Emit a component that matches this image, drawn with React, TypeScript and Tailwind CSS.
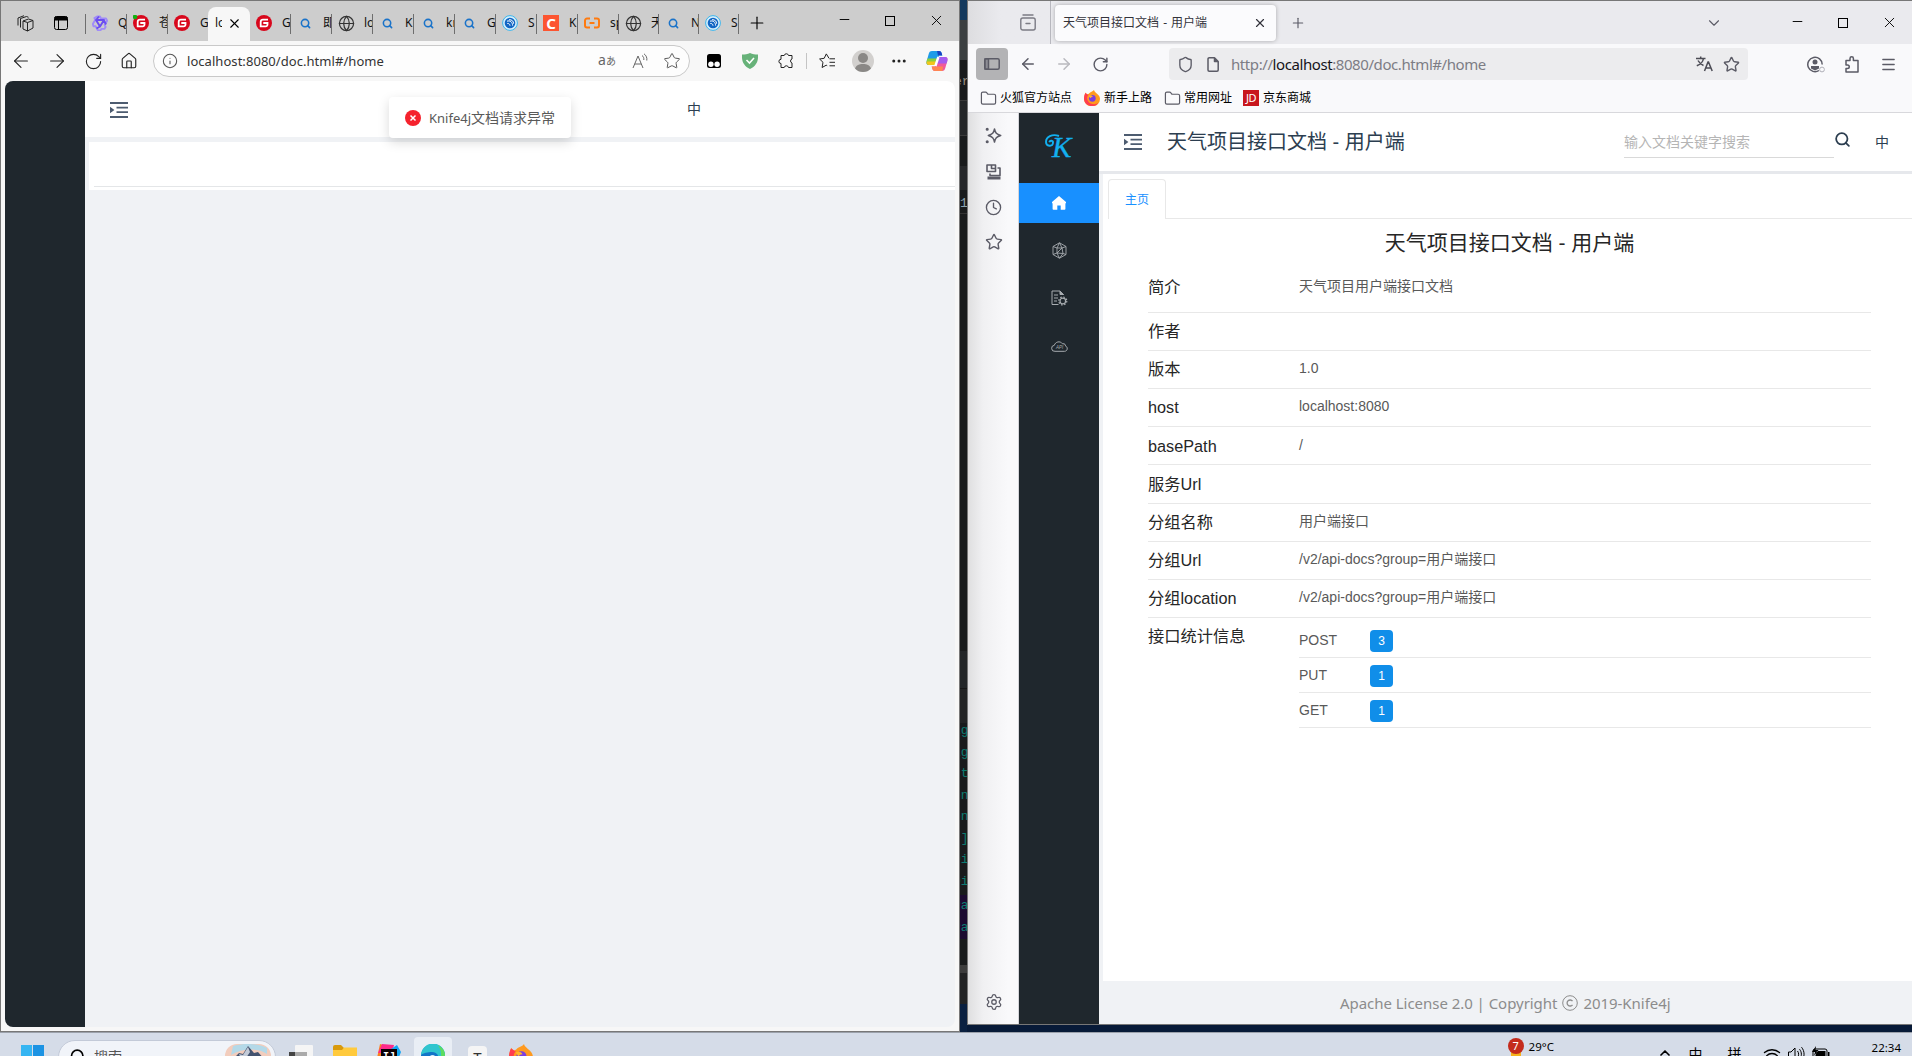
import React from 'react';
import {
  ArrowLeft,
  ArrowRight,
  ChevronDown,
  ChevronUp,
  Clock,
  Ellipsis,
  Folder,
  Globe,
  House,
  Info,
  Menu,
  Minus,
  Plus,
  RotateCw,
  Search,
  Settings,
  Shield,
  Star,
  Wifi,
  X
} from 'lucide-react';

type Favicon = 'qwen' | 'gitee' | 'giteeDot' | 'search' | 'globe' | 'spring' | 'csdn' | 'aliyun' | 'none';

interface EdgeTab {
  icon: Favicon;
  title: string;
  active?: boolean;
  width?: string;
}

const edgeTabs: EdgeTab[] = [
  { icon: 'qwen', title: 'Q' },
  { icon: 'giteeDot', title: '苍' },
  { icon: 'gitee', title: 'G' },
  { icon: 'none', title: 'lo', active: true },
  { icon: 'gitee', title: 'G' },
  { icon: 'search', title: '即' },
  { icon: 'globe', title: 'lo' },
  { icon: 'search', title: 'K' },
  { icon: 'search', title: 'kn' },
  { icon: 'search', title: 'G' },
  { icon: 'spring', title: 'S' },
  { icon: 'csdn', title: 'K' },
  { icon: 'aliyun', title: 'sp' },
  { icon: 'globe', title: '天', width: 'w-10' },
  { icon: 'search', title: 'N', width: 'w-10' },
  { icon: 'spring', title: 'S', width: 'w-10' }
];

const infoRows = [
  { label: '简介', value: '天气项目用户端接口文档', height: 'h-[54px]', pad: 'pt-[15px]' },
  { label: '作者', value: '', height: 'h-[38px]', pad: 'pt-[5px]' },
  { label: '版本', value: '1.0', height: 'h-[38px]', pad: 'pt-[5px]' },
  { label: 'host', value: 'localhost:8080', height: 'h-[38px]', pad: 'pt-[5px]' },
  { label: 'basePath', value: '/', height: 'h-[38px]', pad: 'pt-[6px]' },
  { label: '服务Url', value: '', height: 'h-[39px]', pad: 'pt-[6px]' },
  { label: '分组名称', value: '用户端接口', height: 'h-[38px]', pad: 'pt-[5px]' },
  { label: '分组Url', value: '/v2/api-docs?group=用户端接口', height: 'h-[38px]', pad: 'pt-[5px]' },
  { label: '分组location', value: '/v2/api-docs?group=用户端接口', height: 'h-[38px]', pad: 'pt-[5px]' }
];

const methodStats = [
  { method: 'POST', count: 3 },
  { method: 'PUT', count: 1 },
  { method: 'GET', count: 1 }
];

const codeLines = ['ig', 'ig', ' t', 'on', 'on', 't]', 'Di', 'Di'];

const GiteeIcon: React.FC<{ dot?: boolean }> = ({ dot }) => (
  <svg width="16" height="16" viewBox="0 0 16 16" fill="none">
    <circle cx="8" cy="8" r="8" fill="#d8071c" />
    <path d="M12 4.700H7A2.300 2.300 0 0 0 4.700 7v4.300h5A1.800 1.800 0 0 0 11.500 9.500V8H7.300" stroke="#fff" strokeWidth="1.800" />
    {dot && <circle cx="2" cy="2" r="2.300" fill="#12b212" />}
  </svg>
);

const SpringFavicon = () => (
  <svg width="16" height="16" viewBox="0 0 16 16" fill="none">
    <circle cx="8" cy="8" r="7.400" fill="#d5eefa" stroke="#3db5ec" />
    <circle cx="8" cy="8" r="5.300" fill="#1166c4" />
    <path d="M5 6.200c3-1 5.500.8 5.600 4.400M5.300 8.500c1.500-.2 2.600.6 2.700 2.200M7 4.700c3-.2 4.800 1.800 4.600 4" stroke="#fff" strokeWidth="1" />
  </svg>
);

const QwenIcon = () => (
  <svg width="16" height="16" viewBox="0 0 16 16" fill="none" stroke="#6b4df0" strokeWidth="1.900" strokeLinejoin="round">
    <path d="M5 1.500h3l1 2h5l1.200 2.200-2.600 4.200 1 2-1.200 2H9.500l-1.200 1.600H6l-2.400-4.200H1.500L.8 9l2.500-4.200-.9-1.700z" stroke="#a08bf8" />
    <path d="M4 5h8l-4 6.500zM7 1.500 4 5M14 9.500l-2-4M4.500 13.500l3.500-2" />
  </svg>
);

const TabIcon: React.FC<{ icon: Favicon }> = ({ icon }) => {
  switch (icon) {
    case 'qwen': return <QwenIcon />;
    case 'gitee': return <GiteeIcon />;
    case 'giteeDot': return <GiteeIcon dot />;
    case 'search': return <Search className="ml-[3px] h-[11px] w-[11px] text-[#1a73c9]" strokeWidth={3.4} />;
    case 'globe': return <Globe className="h-[17px] w-[17px] text-[#333]" strokeWidth={1.7} />;
    case 'spring': return <SpringFavicon />;
    case 'csdn':
      return (
        <span className="flex h-4 w-4 items-center justify-center bg-[#fc5531] text-[15px] leading-none font-bold text-white">
          C
        </span>
      );
    case 'aliyun':
      return (
        <svg width="16" height="16" viewBox="0 0 16 16" fill="none" stroke="#ff7a0f" strokeWidth="2">
          <path d="M6 3.500H3A2 2 0 0 0 1 5.500v5a2 2 0 0 0 2 2h3M10 3.500h3a2 2 0 0 1 2 2v5a2 2 0 0 1-2 2h-3M5.500 8h5" />
        </svg>
      );
    default: return null;
  }
};

const FoldIcon = () => (
  <svg width="18" height="16" viewBox="0 0 18 16" fill="#4d5c70">
    <path d="M0 0h18v2H0zM6.500 4.700H18v1.800H6.500zM6.500 9.300H18v1.800H6.500zM0 14h18v2H0zM0 4.800 4.400 8 0 11.200z" />
  </svg>
);

const FirefoxIcon: React.FC<{ size: number }> = ({ size }) => (
  <svg width={size} height={size} viewBox="0 0 16 16">
    <path d="M10 0c.3 1.400 1.300 2 2.400 3.200C15 5 16 7 16 9a8 7.300 0 0 1-16 0c0-3 1-4.600 1.400-6.500l1.700 2 1.700-.8C6.500 1.500 8.600 2 10 0z" fill="#ff9a1f" />
    <path d="M1.400 3C.4 4.500 0 6.800 0 9a8 7.300 0 0 0 14.500 4C11 15 6 14.500 4 11 2.600 8.500 3 6.500 4.500 5z" fill="#ff3d4f" />
    <circle cx="8.300" cy="8.300" r="3.400" fill="#7a3fe0" />
    <path d="M4.500 5.600c2-.8 3.600-.2 4.500 1.200-1.500 0-2 .8-2.800 1.400z" fill="#ffb52b" />
  </svg>
);

const CopilotIcon = () => (
  <svg width="22" height="20" viewBox="0 0 22 20">
    <path d="M6 0h7c1.500 0 2.200.8 2.600 2l.7 2.500H13L9.500 14H3C.8 14 0 12.500.7 10l2-7C3.200 1 4 0 6 0z" fill="#1e9be8" />
    <path d="M1.500 7.500h9.800L9.500 14H3C.8 14 0 12.500.7 10z" fill="#8ccf3d" />
    <path d="M.6 10.500h9.800l-.9 3.500H3c-1.800 0-2.600-1.200-2.400-3.500z" fill="#f3c61c" />
    <path d="M11 0h2c1.500 0 2.200.8 2.600 2l.7 2.500H12z" fill="#1641c4" />
    <path d="M16 20H9c-1.500 0-2.200-.8-2.600-2l-.7-2.500H9L12.500 6H19c2.200 0 3 1.500 2.300 4l-2 7c-.5 2-1.300 3-3.300 3z" fill="#f0599b" />
    <path d="M12.500 6H19c2.200 0 3 1.500 2.300 4l-.8 2.500H10.600z" fill="#a45bee" />
    <path d="M5.700 15.500H17l-.6 4.400L9 20c-1.500 0-2.200-.8-2.600-2z" fill="#ff8552" />
    <path d="m12.400 6-3 9" stroke="#fff" strokeWidth="2.400" />
  </svg>
);

const TabActionsIcon = () => (
  <svg width="17" height="17" viewBox="0 0 17 17" fill="none" stroke="#222" strokeLinejoin="round">
    <path d="m6 6 5.500-2 4.500 1.500v7.500L10.500 16 6 14zM6 6l4.500 1.500L16 5.500M10.500 7.500V16M3.500 12.500v-9L9.500 1.500l2 .8M1 10.500V3L7 .7" />
  </svg>
);

const EdgeTabItem: React.FC<{ tab: EdgeTab }> = ({ tab }) => {
  if (tab.active) {
    return (
      <div className="relative z-10 -ml-px flex h-[34px] w-[42px] shrink-0 items-center rounded-t-lg bg-[#f7f7f7] pb-[2px] pl-[7px]">
        <span className="w-[7px] overflow-hidden">{tab.title}</span>
        <X className="ml-[5px] h-[15px] w-[15px] shrink-0 text-black" strokeWidth={1.8} />
      </div>
    );
  }
  return (
    <div className={`flex h-[34px] shrink-0 items-center ${tab.width ?? 'w-[41px]'}`}>
      <div className="flex h-5 w-full items-center overflow-hidden border-r border-[#6e6e6e] pb-[2px]">
        <span className="ml-[6px] flex w-[26px] shrink-0">
          <TabIcon icon={tab.icon} />
        </span>
        <span className="whitespace-nowrap">{tab.title}</span>
      </div>
    </div>
  );
};

const WindowControls = () => (
  <div className="flex text-black">
    <span className="flex w-[46px] justify-center"><Minus className="h-[15px] w-[15px]" strokeWidth={1.5} /></span>
    <span className="flex w-[46px] items-center justify-center"><i className="h-[10px] w-[10px] border border-black" /></span>
    <span className="flex w-[46px] justify-center"><X className="h-[17px] w-[17px]" strokeWidth={1.3} /></span>
  </div>
);

const EdgeToolbar = () => (
  <div className="flex h-[40px] shrink-0 items-center bg-[#f7f7f7] pl-[2px] text-[#222]">
    <span className="flex w-9 justify-center"><ArrowLeft className="h-[22px] w-[22px]" strokeWidth={1.2} /></span>
    <span className="flex w-9 justify-center"><ArrowRight className="h-[22px] w-[22px]" strokeWidth={1.2} /></span>
    <span className="flex w-9 justify-center"><RotateCw className="h-[19px] w-[19px]" strokeWidth={1.4} /></span>
    <span className="flex w-9 justify-center"><House className="h-[18px] w-[18px]" strokeWidth={1.5} /></span>
    <div className="ml-[6px] flex h-8 w-[537px] items-center rounded-full border border-[#c9c9c9] bg-[#fdfdfd] pl-[8px]">
      <Info className="h-[16px] w-[16px] text-[#555]" strokeWidth={1.6} />
      <span className="mt-px ml-[9px] w-[404px] text-[13px] tracking-[0.05px] text-[#333]">localhost:8080/doc.html#/home</span>
      <span className="flex w-8 justify-center text-[14px] leading-none whitespace-nowrap text-[#666]">
        a<span className="text-[10px] leading-[16px]">あ</span>
      </span>
      <svg className="ml-[9px]" width="17" height="17" viewBox="0 0 17 17" fill="none" stroke="#666">
        <path d="m1 15 5-12 5 12M2.700 11h6.500M10 2.500c1.500 1 2 2.500 1.800 4.500M12 .8c2.300 1.700 3.200 4 2.800 6.700" />
      </svg>
      <Star className="ml-[14px] h-[18px] w-[18px] text-[#555]" strokeWidth={1.3} />
    </div>
    <span className="ml-[6px] flex w-9 justify-center">
      <svg width="14" height="14" viewBox="0 0 14 14">
        <rect width="14" height="14" rx="2.500" fill="#000" />
        <circle cx="3.900" cy="10.200" r="2.700" fill="#fff" />
        <circle cx="10.100" cy="10.200" r="2.700" fill="#fff" />
      </svg>
    </span>
    <span className="flex w-9 justify-center">
      <svg width="16" height="16" viewBox="0 0 16 16" fill="none">
        <path d="M8 0c2.500 1.200 5 1.500 8 1.500C16.500 8 14.500 13 8 16 1.500 13-.5 8 0 1.500 3 1.500 5.500 1.200 8 0z" fill="#67b279" />
        <path d="m4.500 7 3 3L12 5" stroke="#fff" strokeWidth="1.600" />
      </svg>
    </span>
    <span className="flex w-9 justify-center">
      <svg width="16" height="16" viewBox="0 0 16 16" fill="none" stroke="#222" strokeLinejoin="round">
        <path d="M3 2.500h3.200a2.200 2.200 0 0 1 4.300 0H14V6a2.100 2.100 0 0 0 0 4v4.500h-3.500a2.200 2.200 0 0 0-4.300 0H3V10.500a2.100 2.100 0 0 1 0-4.200z" />
      </svg>
    </span>
    <i className="ml-[2px] h-4 w-px bg-[#c4c4c4]" />
    <span className="ml-[2px] flex w-9 justify-center">
      <svg width="17" height="17" viewBox="0 0 17 17" fill="none" stroke="#222">
        <path d="M10 5.300 7.300.9 5.200 5.300.6 6l3.400 3.300-.9 5.200 4.100-2.300 1 .5M10.500 5.800H16M10.500 9.300H16M10.500 12.800H16" />
      </svg>
    </span>
    <span className="flex w-9 justify-center">
      <svg width="22" height="22" viewBox="0 0 22 22">
        <circle cx="11" cy="11" r="11" fill="#d2d0ce" />
        <circle cx="11" cy="8" r="5" fill="#8a8886" />
        <path d="M3 18.500C4.500 15 7 14 11 14s6.500 1 8 4.500C17 21 14 22 11 22s-6-1-8-3.500z" fill="#8a8886" />
      </svg>
    </span>
    <span className="flex w-9 justify-center"><Ellipsis className="h-[18px] w-[18px]" strokeWidth={2} /></span>
    <span className="ml-[2px] flex w-9 justify-center"><CopilotIcon /></span>
  </div>
);

const EdgeWindow = () => (
  <div className="flex h-[1032px] w-[960px] shrink-0 flex-col border border-[#777] bg-[#f7f7f7]">
    <div className="flex h-[40px] shrink-0 items-end bg-[#cdcdcd] text-[12px] text-[#111]">
      <div className="flex h-[34px] w-[85px] items-center">
        <div className="flex h-5 w-full items-center border-r border-[#6e6e6e] pb-[2px] pl-[16px]">
          <TabActionsIcon />
          <svg className="ml-[20px]" width="14" height="14" viewBox="0 0 14 14" fill="none" stroke="#000">
            <rect x=".5" y=".5" width="13" height="13" rx="2" />
            <path d="M1 1h12v3H1z" fill="#000" />
            <path d="M4.500 4v9" />
          </svg>
        </div>
      </div>
      <div className="flex">
        {edgeTabs.map((tab, index) => (
          <EdgeTabItem key={index} tab={tab} />
        ))}
      </div>
      <div className="flex h-[34px] items-center pb-[2px] pl-[8px]">
        <Plus className="h-5 w-5 text-black" strokeWidth={1.4} />
      </div>
      <div className="mb-[12px] ml-auto">
        <WindowControls />
      </div>
    </div>
    <EdgeToolbar />
    <div className="relative mr-[4px] ml-[4px] flex h-[946px] shrink-0 overflow-hidden rounded-lg bg-[#f0f2f5]">
      <div className="w-[80px] shrink-0 bg-[#1f272d]" />
      <div className="flex flex-1 flex-col">
        <div className="flex h-[56px] items-start bg-white pl-[25px]">
          <span className="mt-[21px]"><FoldIcon /></span>
          <span className="mt-[18px] ml-[559px] text-[14px] leading-5 text-[#2c3e50]">中</span>
        </div>
        <div className="mt-[5px] ml-[4px] h-[48px] bg-white pl-[5px]">
          <div className="h-[45px] border-b border-[#e4e6e8]" />
        </div>
      </div>
      {/* error message floats over the page */}
      <div className="absolute top-[16px] left-[384px] flex h-[41px] w-[182px] items-center rounded bg-white pl-[16px] shadow-[0_4px_12px_rgba(0,0,0,0.15)]">
        <svg width="16" height="16" viewBox="0 0 16 16">
          <circle cx="8" cy="8" r="8" fill="#f5222d" />
          <path d="m5.500 5.500 5 5m0-5-5 5" stroke="#fff" strokeWidth="1.500" />
        </svg>
        <span className="ml-[8px] text-[14px] whitespace-nowrap text-[#595959]">
          <span className="text-[13px]">Knife4j</span>文档请求异常
        </span>
      </div>
    </div>
  </div>
);

// Slice of the editor that shows between both windows
const EditorSlice = () => (
  <div className="flex h-[1032px] w-[7px] shrink-0 flex-col overflow-hidden bg-[#191b1c] font-['Liberation_Mono','Noto_Sans_CJK_SC',monospace] text-[13px] text-[#0c7c72]">
    <div className="h-[20px] shrink-0 bg-[#14395d]" />
    <div className="h-[40px] shrink-0 bg-[#3b3f41]" />
    <div className="h-[41px] shrink-0 border-b border-[#3a3a3a] pt-[12px] text-[#9a8f84]"><span className="-ml-[6px]">er</span></div>
    <div className="h-[35px] shrink-0 border-b border-[#3a3a3a] bg-[#242628]" />
    <div className="h-[30px] shrink-0" />
    <div className="h-[24px] shrink-0 bg-[#26282a]" />
    <div className="h-[24px] shrink-0 border-b border-[#333] pt-[5px] leading-[18px] text-[#8fa3b0]">1</div>
    <div className="h-[437px] shrink-0" />
    <div className="h-[38px] shrink-0 border-b border-[#161616] bg-[#232628]" />
    <div className="h-[34px] shrink-0 bg-[#232425]" />
    {codeLines.map((line, index) => (
      <div key={index} className="-ml-[7px] h-[21.5px] shrink-0 leading-[16px] whitespace-pre">{line}</div>
    ))}
    <div className="h-[44px] shrink-0 bg-[#1c0b30]">
      <div className="-ml-[7px] h-[22px] leading-[22px]">Pa</div>
      <div className="-ml-[7px] h-[22px] leading-[22px]">Pa</div>
    </div>
    <div className="h-[26px] shrink-0" />
    <div className="h-[8px] shrink-0 bg-[#3d3d3d]" />
    <div className="h-[31px] shrink-0 bg-[#222324]" />
    <div className="flex-1 bg-[#0a2040]" />
  </div>
);

const FirefoxTabBar = () => (
  <div className="flex h-[43px] shrink-0 items-center bg-[#eaeaee] text-[#5b5b66]">
    <div className="flex h-full w-[83px] items-center justify-end border-r border-[#b8b8bf] bg-linear-to-r from-[#dddde0] to-[#eaeaee] to-40% pr-[14px]">
      <svg width="16" height="17" viewBox="0 0 16 17" fill="none" stroke="#7b7b84" strokeWidth="1.400" strokeLinecap="round">
        <rect x=".8" y="4" width="14.400" height="12" rx="2" />
        <path d="M3 1h10M6 9.500h4" />
      </svg>
    </div>
    <div className="ml-[4px] flex h-[36px] w-[221px] items-center rounded bg-[#fbfbfd] px-[8px] text-[12px] text-[#33333b] shadow-[0_0_4px_rgba(0,0,0,0.28)]">
      <span className="whitespace-pre">天气项目接口文档 <span className="mx-px">-</span> 用户端</span>
      <X className="mr-px ml-auto h-[14px] w-[14px] text-[#33333b]" strokeWidth={2} />
    </div>
    <Plus className="ml-[14px] h-[16px] w-[16px]" strokeWidth={1.7} />
    <ChevronDown className="mr-[51px] ml-auto h-[18px] w-[18px]" strokeWidth={1.5} />
    <WindowControls />
  </div>
);

const FirefoxToolbar = () => (
  <div className="flex h-[40px] shrink-0 items-center pl-[6px] text-[#5b5b66]">
    <span className="flex w-9 justify-center">
      <span className="flex h-8 w-8 items-center justify-center rounded bg-[#b3b3b5]">
        <svg width="16" height="12" viewBox="0 0 16 12" fill="none" stroke="#5b5b66" strokeWidth="1.500">
          <rect x=".8" y=".8" width="14.400" height="10.400" rx="1.500" />
          <path d="M1 1h3.500v10H1z" fill="#8d8d95" />
        </svg>
      </span>
    </span>
    <span className="flex w-9 justify-center"><ArrowLeft className="h-[18px] w-[18px]" strokeWidth={2} /></span>
    <span className="flex w-9 justify-center"><ArrowRight className="h-[18px] w-[18px] text-[#b9b9bf]" strokeWidth={2} /></span>
    <span className="flex w-9 justify-center"><RotateCw className="h-[17px] w-[17px]" strokeWidth={2} /></span>
    <div className="ml-[51px] flex h-8 w-[579px] items-center rounded bg-[#ececee] pl-[8px]">
      <Shield className="h-[17px] w-[17px]" strokeWidth={1.9} />
      <svg className="ml-[13px]" width="12" height="15" viewBox="0 0 12 15" fill="none" stroke="#5b5b66" strokeWidth="1.500" strokeLinejoin="round">
        <path d="M1 2a1.200 1.200 0 0 1 1.200-1.200H7.500L11.200 4.500v8.500a1.200 1.200 0 0 1-1.200 1.200H2.200A1.200 1.200 0 0 1 1 13z" />
        <path d="M7.500 1v3.500H11" fill="#5b5b66" />
      </svg>
      <span className="ml-[12px] w-[463px] text-[15px] tracking-[-0.42px] text-[#7d7d85]">
        http://<span className="text-[#15141a]">localhost</span>:8080/doc.html#/home
      </span>
      <span className="flex w-[20px] justify-center">
        <svg width="17" height="16" viewBox="0 0 17 16" fill="none" stroke="#4c4c55" strokeWidth="1.500">
          <path d="M0 2.500h9.500M4.700.5v2M7.500 2.500C7 5.500 4 8.500.8 9.800M2 4.500c1.200 2.200 3 4 5.500 5M8.500 15l3.500-9h.5l3.700 9M9.700 12h5" />
        </svg>
      </span>
      <Star className="ml-[9px] h-[17px] w-[17px]" strokeWidth={2} />
    </div>
    <div className="ml-[50px] flex">
      <span className="flex w-9 justify-center">
        <svg width="18" height="17" viewBox="0 0 18 17" fill="none">
          <path d="M12 14.500A7.200 7.200 0 1 1 15.200 8.500" stroke="#5b5b66" strokeWidth="1.500" />
          <circle cx="8" cy="6" r="2.500" fill="#5b5b66" />
          <path d="M4 10h8v2.500L8 14.500 4 12.500z" fill="#5b5b66" />
          <circle cx="15" cy="13.500" r="2.400" stroke="#b0b0b8" />
        </svg>
      </span>
      <span className="flex w-9 justify-center">
        <svg width="14" height="17" viewBox="0 0 14 17" fill="none" stroke="#5b5b66" strokeWidth="1.500" strokeLinejoin="round">
          <path d="M1 4.500h4V2.500a1.700 1.700 0 0 1 3.400 0v2H13V16H1v-3.500h1.500a1.700 1.700 0 0 0 0-3.500H1z" />
        </svg>
      </span>
      <span className="flex w-9 justify-center"><Menu className="h-[17px] w-[17px]" strokeWidth={1.9} /></span>
    </div>
  </div>
);

const BookmarkBar = () => (
  <div className="flex h-[29px] shrink-0 items-center border-b border-[#d8d8dc] pl-[12px] text-[12px] text-black">
    <Folder className="h-[17px] w-[17px] text-[#5b5b66]" strokeWidth={1.7} />
    <span className="ml-[3px] w-[72px]">火狐官方站点</span>
    <span className="ml-[12px]"><FirefoxIcon size={16} /></span>
    <span className="ml-[4px]">新手上路</span>
    <Folder className="ml-[12px] h-[17px] w-[17px] text-[#5b5b66]" strokeWidth={1.7} />
    <span className="ml-[3px]">常用网址</span>
    <span className="ml-[11px] flex h-4 w-4 items-center justify-center bg-[#c8161d] text-[11px] tracking-tighter text-white">JD</span>
    <span className="ml-[4px]">京东商城</span>
  </div>
);

const FirefoxSidebar = () => (
  <div className="flex w-[51px] shrink-0 flex-col items-center border-r border-[#d5d5da] bg-linear-to-r from-[#dfdfe0] via-[#f0f0f2] via-30% to-[#f9f9fb] to-80% pt-[4px] pl-px text-[#5b5b66]">
    <span className="flex h-[36px] items-center">
      <svg width="17" height="17" viewBox="0 0 17 17" fill="none" stroke="#5b5b66" strokeWidth="1.500" strokeLinejoin="round">
        <path d="M9.500 2c.8 4 2 5.300 6.200 6.500-4.200 1.200-5.400 2.500-6.200 6.500-.8-4-2-5.300-6.200-6.500C7.500 7.300 8.700 6 9.500 2z" />
        <circle cx="2.200" cy="2.200" r=".8" />
        <circle cx="2.200" cy="14.800" r=".8" />
      </svg>
    </span>
    <span className="flex h-[37px] items-center">
      <svg width="16" height="16" viewBox="0 0 16 16" fill="none" stroke="#5b5b66" strokeWidth="1.600" strokeLinejoin="round">
        <path d="M1 1h8.500v6.500H1zM5.500 1v3.500h4M11.500 4H14v7.500H4V9.500" />
        <path d="M1.500 14h13" strokeWidth="3" />
      </svg>
    </span>
    <span className="flex h-[34px] items-center"><Clock className="h-[17px] w-[17px]" strokeWidth={1.9} /></span>
    <span className="flex h-[35px] items-center"><Star className="h-[18px] w-[18px]" strokeWidth={1.9} /></span>
    <Settings className="mt-auto mb-[13px] h-[18px] w-[18px]" strokeWidth={1.7} />
  </div>
);

const DocNav = () => (
  <div className="flex w-[80px] shrink-0 flex-col items-center bg-[#1f272d] text-[#a7acb0]">
    <div className="flex h-[70px] items-center pb-[4px]">
      <svg width="30" height="28" viewBox="0 0 30 28" fill="none">
        <text x="8" y="24.500" fontSize="29" fontStyle="italic" fontFamily="Liberation Serif, serif" fill="#12b0f0" stroke="#12b0f0" strokeWidth=".4">K</text>
        <path d="M15 4C8 1.500 2 5 2 10c0 4.500 6.500 5 7 1 .3-2.500-3-3.200-3.700-.8" stroke="#12b0f0" strokeWidth="1.900" />
      </svg>
    </div>
    <div className="flex h-[40px] w-full items-center justify-center bg-[#1890ff]">
      <svg width="14" height="14" viewBox="0 0 14 14" fill="#fff">
        <path d="M7 0 0 6v1.200h.6V13c0 .5.3.8.8.8h3.900V9.500h3.400v4.300h3.900c.5 0 .8-.3.8-.8V7.200h.6V6z" />
      </svg>
    </div>
    <div className="mt-[15px] flex h-[24px] items-center">
      <svg width="15" height="17" viewBox="0 0 15 17" fill="none" stroke="currentColor" strokeWidth=".9">
        <path d="M7.500.8 14 4.500v8L7.500 16.200 1 12.500v-8zM1 4.500l4 1.500v5l-4 1.500M14 4.500 10 6l-5 0M10 6l1 5.500 3 1M5 11l6 .5-3.500 4.700L5 11M7.500.8 5 6M7.500.8 10 6M5 11l5-5" />
      </svg>
    </div>
    <div className="mt-[24px] flex h-[24px] items-center">
      <svg width="17" height="16" viewBox="0 0 17 16" fill="none" stroke="currentColor">
        <path d="M7.500 14.500H1V1h8l3.500 3.500M3 5h4M3 8h4M3 11h3" />
        <path d="M9 1v3.500h3.500z" fill="currentColor" />
        <circle cx="11.800" cy="11" r="2.800" strokeWidth="1.200" />
        <circle cx="11.800" cy="11" r="4" strokeDasharray="1.600 1.540" strokeWidth="1.200" />
      </svg>
    </div>
    <div className="mt-[25px] flex h-[22px] items-center">
      <svg width="17" height="11" viewBox="0 0 17 11" fill="none" stroke="currentColor">
        <path d="M4 10.300a3 3 0 0 1-.7-6C4.300.8 9-.6 11.500 2.800c2.500-.4 3 1 3 2.200 2.600.8 2.300 5.300-1 5.300z" />
        <text x="5" y="8.300" fontSize="4.500" fontStyle="italic" stroke="none" fill="currentColor">API</text>
      </svg>
    </div>
  </div>
);

const DocPage = () => (
  <div className="flex min-w-0 flex-1 flex-col bg-white">
    <div className="flex h-[58px] shrink-0 items-center pl-[25px] text-[#2c3e50]">
      <FoldIcon />
      <span className="ml-[25px] text-[20px] leading-none whitespace-pre">天气项目接口文档 - 用户端</span>
      <div className="mb-[4px] ml-auto h-[35px] w-[210px] border-b border-[#d9d9d9] pt-[9px] text-[14px] leading-5 text-[#b5b5b5]">
        输入文档关键字搜索
      </div>
      <Search className="mb-[5px] h-[17px] w-[17px]" strokeWidth={2.5} />
      <span className="mr-[23px] ml-[24px] text-[14px]">中</span>
    </div>
    <div className="h-[3px] shrink-0 bg-[#e6e8ec]" />
    <div className="flex min-h-0 flex-1 flex-col border-l-4 border-[#f0f2f5]">
      <div className="flex h-[45px] shrink-0 items-end pl-[5px]">
        <div className="flex h-[40px] w-[58px] items-center justify-center rounded-t border border-b-0 border-[#e8e8e8] text-[12px] text-[#1890ff]">
          主页
        </div>
        <div className="h-px flex-1 bg-[#e8e8e8]" />
      </div>
      <div className="flex h-[40px] shrink-0 items-center justify-center pt-[6px] pl-[4px] text-[21px] leading-none whitespace-pre text-[#262626]">
        天气项目接口文档 - 用户端
      </div>
      <div className="mr-[41px] ml-[45px]">
        {infoRows.map((row) => (
          <div key={row.label} className={`flex border-b border-[#e8e8e8] ${row.height} ${row.pad}`}>
            <span className="w-[151px] text-[16.25px] leading-[26px] text-[#262626]">{row.label}</span>
            <span className="text-[14px] leading-[25px] text-[#595959]">{row.value}</span>
          </div>
        ))}
        <div className="flex">
          <span className="w-[151px] shrink-0 pt-[5px] text-[16.25px] leading-[26px] text-[#262626]">接口统计信息</span>
          <div className="flex-1 pt-[5px]">
            {methodStats.map((stat) => (
              <div key={stat.method} className="flex h-[35px] items-center border-b border-[#e8e8e8] text-[14px] text-[#595959]">
                <span className="w-[71px]">{stat.method}</span>
                <span className="mt-[2px] flex h-[22px] w-[23px] items-center justify-center rounded bg-[#108ee9] text-[12px] text-white">
                  {stat.count}
                </span>
              </div>
            ))}
          </div>
        </div>
      </div>
    </div>
    <div className="flex h-[43px] shrink-0 items-center bg-[#f0f2f5] pt-px pl-[241px] font-['Noto_Sans','Noto_Sans_CJK_SC',sans-serif] text-[15px] tracking-[-0.04px] text-[#8c8c8c]">
      Apache License 2.0 | Copyright
      <svg className="mx-[5px]" width="16" height="16" viewBox="0 0 16 16" fill="none" stroke="#8c8c8c">
        <circle cx="8" cy="8" r="7.300" />
        <path d="M10.500 6.200a3 3 0 1 0 0 3.600" strokeWidth="1.300" />
      </svg>
      2019-Knife4j
    </div>
  </div>
);

const FirefoxWindow = () => (
  <div className="flex h-[1025px] min-w-0 flex-1 flex-col border-t border-b border-l border-[#777] bg-[#f9f9fb]">
    <FirefoxTabBar />
    <FirefoxToolbar />
    <BookmarkBar />
    <div className="flex min-h-0 flex-1">
      <FirefoxSidebar />
      <div className="flex min-w-0 flex-1 font-['Liberation_Sans','Noto_Sans_CJK_SC',sans-serif]">
        <DocNav />
        <DocPage />
      </div>
    </div>
  </div>
);

const Taskbar = () => (
  <div className="flex h-[24px] items-start overflow-hidden border-t border-[#9ba1ab] bg-[#d5dce8] text-[12px] text-black">
    <svg className="mt-[12px] ml-[21px] shrink-0" width="23" height="23" viewBox="0 0 23 23">
      <path d="M0 0h11v11H0zM0 12h11v11H0z" fill="#35b5f2" />
      <path d="M12 0h11v11H12zM12 12h11v11H12z" fill="#1c93e3" />
    </svg>
    <div className="mt-[7px] ml-[14px] flex h-[34px] w-[218px] shrink-0 items-start rounded-full border border-[#c3cad8] bg-[#f1f4f9] pl-[9px]">
      <Search className="mt-[7px] h-[17px] w-[17px] -scale-x-100" strokeWidth={2.4} />
      <span className="mt-[6px] ml-[9px] text-[14px] leading-5 text-[#555]">搜索</span>
      <svg className="mt-[3px] mr-[4px] ml-auto" width="46" height="28" viewBox="0 0 46 28">
        <rect width="46" height="28" rx="12" fill="#f2cdbd" />
        <path d="M8 2C18-1 32-1 42 4v6c-8-6-24-6-36 1z" fill="#b4d9e8" />
        <path d="m8 15 6-6 4 1 5-8 6 7 4-1 7 8v12H8z" fill="#44536f" />
        <path d="m14 10 4 1 5-8 2 5-4 6-5 1z" fill="#c3cbd8" />
      </svg>
    </div>
    <svg className="mt-[12px] ml-[13px] shrink-0" width="24" height="24" viewBox="0 0 24 24">
      <rect x="6" width="18" height="18" rx="1" fill="#f5f5f5" />
      <path d="M0 7h18v17H0z" fill="#444" />
      <path d="M6 7h12v11H6z" fill="#aaa" />
    </svg>
    <svg className="mt-[12px] ml-[20px] shrink-0" width="24" height="22" viewBox="0 0 24 22">
      <path d="M0 2a2 2 0 0 1 2-2h6l3 3v4H0z" fill="#d99a0c" />
      <path d="M0 5h9l2-2.500h13V22H0z" fill="#ffca3d" />
    </svg>
    <svg className="mt-[11px] ml-[20px] shrink-0" width="24" height="24" viewBox="0 0 24 24">
      <path d="m3 0 9 3-6 14-6-3z" fill="#fc801d" />
      <path d="m5 0 12 1-2 8H1z" fill="#fe2b8b" />
      <path d="m14 5 6-4 4 7-4 10z" fill="#12a5f4" />
      <path d="M4 5h16v16H4z" fill="#0b0205" />
      <text x="6" y="15" fontSize="10" fontWeight="bold" fontFamily="Liberation Mono, monospace" fill="#fff">IJ</text>
    </svg>
    <div className="mt-[4px] ml-[13px] h-[40px] w-[38px] shrink-0 rounded bg-[#e9eef5] pt-[7px] pl-[7px]">
      <svg width="24" height="24" viewBox="0 0 24 24">
        <circle cx="12" cy="12" r="12" fill="#1375c8" />
        <path d="M0 11A12 12 0 0 1 24 12c0 4-3 6-7 5 2-6-2-9-6-9S2 9 0 11z" fill="#30c5cf" />
        <path d="M17 1.200A12 12 0 0 1 24 12c0 3-2 5-5 5 2-6 1-12-2-15.800z" fill="#5edc5f" />
        <circle cx="11.500" cy="14" r="3" fill="#d7effb" />
      </svg>
    </div>
    <span className="mt-[13px] ml-[16px] flex h-[22px] w-[19px] shrink-0 justify-center rounded-sm bg-[#f5f5f5] pt-[4px] text-[15px] leading-none text-[#333]">T</span>
    <span className="mt-[11px] ml-[22px] shrink-0"><FirefoxIcon size={24} /></span>
    <div className="relative mt-[5px] ml-auto h-[19px] w-[21px]">
      <i className="absolute top-[9px] left-[3px] h-[10px] w-[10px] bg-[#f5b21d]" />
      <span className="absolute top-0 left-0 flex h-4 w-4 items-center justify-center rounded-full bg-[#c42b1c] text-[11px] text-white">7</span>
    </div>
    <span className="mt-[6px] w-[128px] text-[11.5px] leading-4">29°C</span>
    <ChevronUp className="mt-[12px] h-[16px] w-[16px]" strokeWidth={2.5} />
    <span className="mt-[11px] ml-[16px] text-[14px] leading-5">中</span>
    <span className="mt-[11px] ml-[25px] text-[14px] leading-5">拼</span>
    <Wifi className="mt-[13px] ml-[21px] h-[18px] w-[18px]" strokeWidth={1.8} />
    <svg className="mt-[13px] ml-[7px]" width="17" height="16" viewBox="0 0 17 16" fill="none" stroke="#000">
      <path d="M.5 6H3l4-4v13l-4-4H.5zM9.500 5c1.500 2 1.500 4.500 0 6.500M11.500 3.200c2.500 3 2.500 7 0 10M13.500 1.200c3.400 4 3.400 10 0 14" />
    </svg>
    <svg className="mt-[13px] ml-[7px]" width="18" height="14" viewBox="0 0 18 14">
      <rect x="1" y="3" width="14" height="10" rx="2" fill="none" stroke="#000" />
      <path d="M5 5h8.500v6H3zM16 6h1.500v4H16zM4 0 0 6h3L2 10l4.500-6h-3z" />
    </svg>
    <span className="mt-[7px] mr-[11px] ml-[42px] text-[11.5px] leading-4">22:34</span>
  </div>
);

const App: React.FC = () => (
  <div className="h-[1056px] w-[1912px] overflow-hidden bg-[#071a38] font-['Noto_Sans','Noto_Sans_CJK_SC',sans-serif]">
    <div className="flex h-[1032px] items-start">
      <EdgeWindow />
      <EditorSlice />
      <FirefoxWindow />
    </div>
    <Taskbar />
  </div>
);

export default App;
